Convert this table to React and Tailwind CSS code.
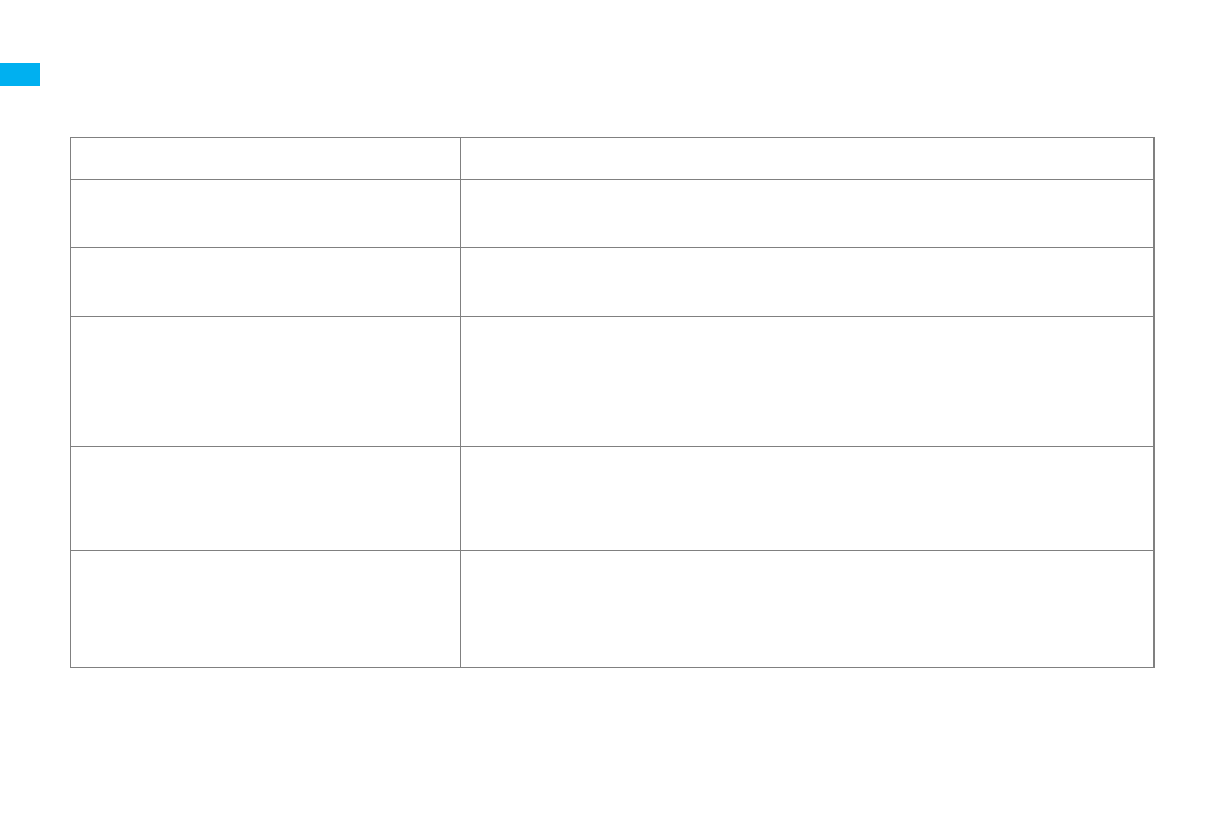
import React from "react";

const rows = [41, 67, 68, 129, 103, 116];

const App = () => {
  return (
    <div className="w-[1225px] h-[828px] bg-white relative font-['Liberation_Sans',sans-serif]">
      <div className="pt-[63px]">
        <div className="w-[40px] h-[23px] bg-[#00b0f0]" />
      </div>
      <div className="ml-[70px] mt-[51px] w-[1085px] border-t border-l border-r-2 border-[#808080]">
        {rows.map((h, i) => (
          <div key={i} className="flex border-b border-[#808080]">
            <div
              className="w-[390px] shrink-0 border-r border-[#808080]"
              style={{ height: h }}
            />
            <div className="flex-1" style={{ height: h }} />
          </div>
        ))}
      </div>
    </div>
  );
};

export default App;
